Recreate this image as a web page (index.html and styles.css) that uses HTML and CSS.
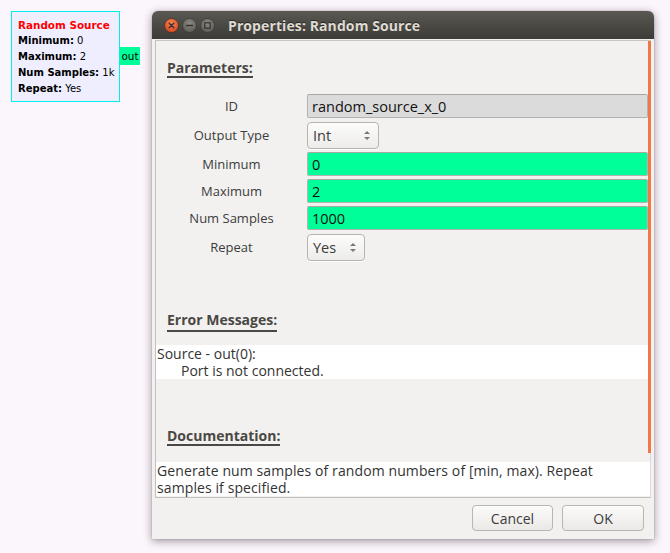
FILE: index.html
```html
<!DOCTYPE html>
<html>
<head>
<meta charset="utf-8">
<title>Properties: Random Source</title>
<link rel="stylesheet" href="styles.css">
</head>
<body>
<div class="desktop">
  <div class="block">
    <div class="block-title">Random Source</div>
    <div class="block-param"><b>Minimum:</b> 0</div>
    <div class="block-param"><b>Maximum:</b> 2</div>
    <div class="block-param"><b>Num Samples:</b> 1k</div>
    <div class="block-param"><b>Repeat:</b> Yes</div>
    <div class="port">out</div>
  </div>

  <div class="window">
    <div class="titlebar">
      <div class="wm-buttons">
        <svg class="wm-btn" width="15" height="15" viewBox="0 0 15 15">
          <defs>
            <radialGradient id="gClose" cx="50%" cy="35%" r="65%">
              <stop offset="0" stop-color="#f8875a"/>
              <stop offset="1" stop-color="#d6461b"/>
            </radialGradient>
          </defs>
          <circle cx="7.5" cy="7.5" r="7" fill="url(#gClose)" stroke="#3a2a22" stroke-width="0.6"/>
          <path d="M5.2 5.2 L9.8 9.8 M9.8 5.2 L5.2 9.8" stroke="#3b2d28" stroke-width="1.4" stroke-linecap="round"/>
        </svg>
        <svg class="wm-btn" width="15" height="15" viewBox="0 0 15 15">
          <defs>
            <radialGradient id="gGray" cx="50%" cy="35%" r="65%">
              <stop offset="0" stop-color="#8a8984"/>
              <stop offset="1" stop-color="#5c5b56"/>
            </radialGradient>
          </defs>
          <circle cx="7.5" cy="7.5" r="7" fill="url(#gGray)" stroke="#33322e" stroke-width="0.6"/>
          <path d="M4.6 7.5 L10.4 7.5" stroke="#34332f" stroke-width="1.4" stroke-linecap="round"/>
        </svg>
        <svg class="wm-btn" width="15" height="15" viewBox="0 0 15 15">
          <circle cx="7.5" cy="7.5" r="7" fill="url(#gGray)" stroke="#33322e" stroke-width="0.6"/>
          <rect x="4.8" y="4.8" width="5.4" height="5.4" fill="none" stroke="#34332f" stroke-width="1.2"/>
        </svg>
      </div>
      <div class="title">Properties: Random Source</div>
    </div>

    <div class="client">
      <div class="frame">
        <div class="heading heading-params"><span>Parameters:</span></div>
        <div class="param-grid">
          <div class="plabel">ID</div>
          <div class="entry entry-readonly">random_source_x_0</div>

          <div class="plabel">Output Type</div>
          <div class="combo combo-type">
            <span>Int</span>
            <span class="spin"><i class="up"></i><i class="down"></i></span>
          </div>

          <div class="plabel">Minimum</div>
          <div class="entry entry-ok">0</div>

          <div class="plabel">Maximum</div>
          <div class="entry entry-ok">2</div>

          <div class="plabel">Num Samples</div>
          <div class="entry entry-ok">1000</div>

          <div class="plabel">Repeat</div>
          <div class="combo combo-repeat">
            <span>Yes</span>
            <span class="spin"><i class="up"></i><i class="down"></i></span>
          </div>
        </div>

        <div class="heading heading-errors"><span>Error Messages:</span></div>
        <div class="textbox">
          <div>Source - out(0):</div>
          <div class="indent">Port is not connected.</div>
        </div>

        <div class="heading heading-doc"><span>Documentation:</span></div>
        <div class="textbox docbox">Generate num samples of random numbers of [min, max). Repeat samples if specified.</div>

        <div class="scroll-indicator"></div>
      </div>

      <div class="actions">
        <button class="btn btn-cancel">Cancel</button>
        <button class="btn btn-ok">OK</button>
      </div>
    </div>
  </div>
</div>
</body>
</html>
```

FILE: styles.css
```css
* { box-sizing: border-box; }

html, body {
  margin: 0;
  padding: 0;
}

body {
  background: #fbf6fb;
  font-family: "Open Sans", "Noto Sans", "DejaVu Sans", sans-serif;
  width: 670px;
  height: 553px;
  overflow: hidden;
}

.desktop {
  position: relative;
  width: 670px;
  height: 553px;
}

/* ---------- flow-graph block ---------- */
.block {
  position: absolute;
  left: 11px;
  top: 11px;
  width: 109px;
  height: 91px;
  background: #eeeeff;
  border: 1px solid #00f0f0;
  padding: 5px 0 0 6px;
  font-family: "DejaVu Sans", sans-serif;
  font-size: 10px;
  line-height: 16px;
  color: #000;
  white-space: nowrap;
}

.block-title {
  color: #ff0000;
  font-weight: bold;
  font-size: 10.4px;
}

.block-param b { font-weight: bold; }

.port {
  position: absolute;
  left: calc(100% + 1px);
  top: 35px;
  width: 20px;
  height: 18px;
  background: #00ff99;
  font-size: 10.4px;
  line-height: 18px;
  text-align: center;
}

/* ---------- dialog window ---------- */
.window {
  position: absolute;
  left: 152px;
  top: 11px;
  width: 502px;
  height: 528px;
  background: #f2f1f0;
  border-radius: 6px 6px 0 0;
  box-shadow: 0 2px 9px rgba(40, 20, 40, 0.45), 0 0 1px rgba(0,0,0,0.5);
  display: flex;
  flex-direction: column;
}

.titlebar {
  height: 28px;
  flex: 0 0 28px;
  border-radius: 6px 6px 0 0;
  background: linear-gradient(#595852, #3c3b37);
  display: flex;
  align-items: center;
  padding-left: 12px;
}

.wm-buttons {
  display: flex;
  gap: 3px;
  margin-top: 1px;
}

.wm-btn { display: block; }

.title {
  margin-left: 13px;
  color: #dfdbd2;
  font-weight: bold;
  font-size: 14px;
  letter-spacing: 0.1px;
  text-shadow: 0 -1px 0 rgba(0,0,0,0.5);
}

.client {
  flex: 1;
  display: flex;
  flex-direction: column;
  padding: 1px 3px 9px 3px;
}

.frame {
  position: relative;
  height: 458px;
  border: 1px solid #c3c0bb;
  border-right-color: #dcdad6;
  border-top-color: #c9c6c1;
  display: flex;
  flex-direction: column;
}

.heading {
  padding-left: 11px;
  font-weight: bold;
  font-size: 14px;
  line-height: 14px;
  color: #4a4844;
}

.heading span {
  display: inline-block;
  padding-bottom: 1px;
  border-bottom: 2px solid #4a4844;
}

.heading-params { margin-top: 20px; }
.heading-errors { margin-top: 52px; }
.heading-errors span { padding-bottom: 3px; }
.heading-doc { margin-top: 50px; }

.param-grid {
  margin-top: 16px;
  display: grid;
  grid-template-columns: 151px 1fr;
  grid-template-rows: 24px 28px 24px 24px 24px 28px;
  row-gap: 3px;
  padding-right: 2px;
  font-size: 13px;
  color: #3c3c3c;
}

.plabel {
  display: flex;
  align-items: center;
  justify-content: center;
}

.entry {
  border: 1px solid #b4b2ae;
  border-top-color: #a9a7a3;
  border-radius: 2px;
  padding-left: 4px;
  font-size: 14.5px;
  color: #111;
  display: flex;
  align-items: center;
}

.entry-readonly { background: #dbdbdb; }
.entry-ok { background: #00ff99; }

.combo {
  justify-self: start;
  align-self: end;
  height: 27px;
  border: 1px solid #b8b5b0;
  border-radius: 4px;
  background: linear-gradient(#fcfcfb, #edecea);
  box-shadow: 0 1px 0 rgba(255,255,255,0.7);
  display: flex;
  align-items: center;
  justify-content: space-between;
  padding: 0 8px 0 5px;
  font-size: 14.5px;
  color: #3c3c3c;
}

.combo-type { width: 72px; }
.combo-repeat { width: 58px; }

.spin {
  display: flex;
  flex-direction: column;
  gap: 3px;
  align-items: center;
}

.spin i {
  display: block;
  width: 0;
  height: 0;
  border-left: 3px solid transparent;
  border-right: 3px solid transparent;
}

.spin .up { border-bottom: 3px solid #7a7976; }
.spin .down { border-top: 3px solid #7a7976; }

.textbox {
  background: #fff;
  font-size: 14px;
  line-height: 17px;
  color: #333;
  padding-left: 1px;
  height: 34px;
}

.heading-errors + .textbox { margin-top: 13px; }

.indent { padding-left: 24px; }

.docbox {
  margin-top: 16px;
  padding-right: 40px;
  letter-spacing: 0.1px;
}

.scroll-indicator {
  position: absolute;
  top: 0;
  right: -1px;
  width: 3px;
  height: 412px;
  background: #f07746;
}

.actions {
  margin-top: 7px;
  display: flex;
  justify-content: flex-end;
  gap: 9px;
  padding-right: 7px;
}

.btn {
  height: 26px;
  border: 1px solid #b9b6b1;
  border-radius: 4px;
  background: linear-gradient(#fbfbfa, #ebe9e6);
  box-shadow: inset 0 1px 0 #fff;
  font-family: "Open Sans", "Noto Sans", sans-serif;
  font-size: 14px;
  color: #3c3c3c;
  padding: 0;
}

.btn-cancel { width: 81px; }
.btn-ok { width: 82px; }
```
